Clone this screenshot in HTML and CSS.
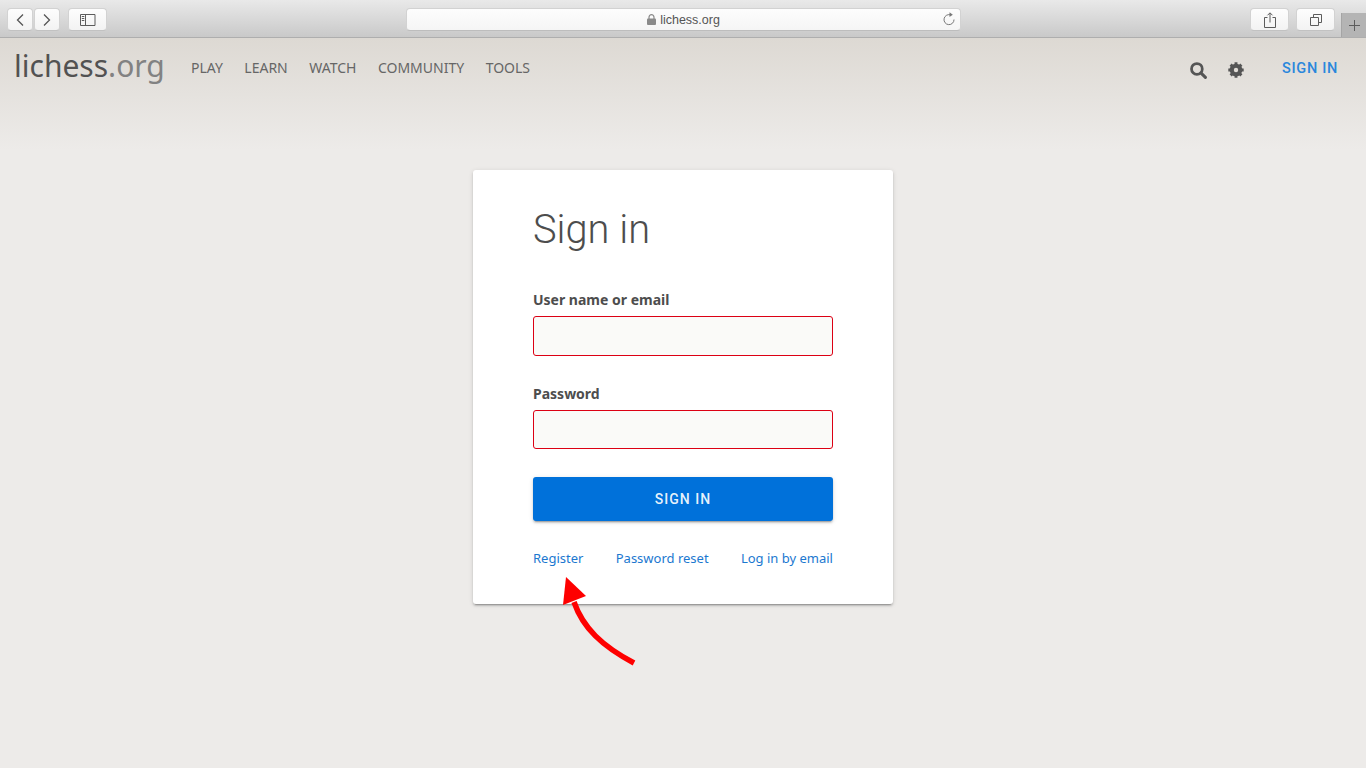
FILE: index.html
```html
<!DOCTYPE html>
<html lang="en">
<head>
<meta charset="utf-8">
<title>lichess.org</title>
<link rel="stylesheet" href="styles.css">
</head>
<body>
<div class="toolbar">
  <div class="nav-pair">
    <button class="tb-btn tb-nav"><svg width="10" height="14" viewBox="0 0 10 14"><path d="M8 1.500 2.500 7 8 12.500" class="ico"/></svg></button>
    <button class="tb-btn tb-nav"><svg width="10" height="14" viewBox="0 0 10 14"><path d="M2 1.500 7.500 7 2 12.500" class="ico"/></svg></button>
  </div>
  <button class="tb-btn tb-side"><svg width="16" height="12" viewBox="0 0 16 12"><path d="M.5.500h14.500v11H.5zM5.500.5v11" class="ico-thin"/><path d="M1.800 2.500h2.500M1.800 4.500h2.500M1.800 6.500h2.500" class="ico-thin"/></svg></button>
  <div class="address">
    <span class="address-text"><svg class="lock" width="9" height="11" viewBox="0 0 9 11"><path d="M2 5V3.200a2.500 2.500 0 0 1 5 0V5" fill="none" stroke="#8a8a8a" stroke-width="1.200"/><rect y="4.500" width="9" height="6.500" rx="1" fill="#8a8a8a"/></svg>lichess.org</span>
    <svg class="reload" width="12" height="14" viewBox="0 0 12 14"><path d="M7.300 2.800A5 5 0 1 0 11 7.500" fill="none" stroke="#777" stroke-width="1"/><path d="M6.500 0.300 9.800 2.800 6.500 5z" fill="#777"/></svg>
  </div>
  <div class="tb-right">
    <button class="tb-btn tb-act"><svg width="12" height="16" viewBox="0 0 12 16"><path d="M3.500 5.500H.5v10h11v-10h-3M6 10.500V1M3.500 3.300 6 .8l2.500 2.500" class="ico-thin"/></svg></button>
    <button class="tb-btn tb-act"><svg width="12" height="12" viewBox="0 0 12 12"><path d="M.5 3.500h8v8h-8zM3.500 3.500v-3h8v8h-3" class="ico-thin"/></svg></button>
  </div>
  <div class="new-tab"><svg width="11" height="11" viewBox="0 0 11 11"><path d="M5.500 0v11M0 5.500h11" class="ico-thin"/></svg></div>
</div>

<header class="site-header">
  <a class="logo">lichess<span class="logo-tld">.org</span></a>
  <nav class="site-nav">
    <a>PLAY</a>
    <a>LEARN</a>
    <a>WATCH</a>
    <a>COMMUNITY</a>
    <a>TOOLS</a>
  </nav>
  <div class="header-right">
    <svg class="h-icon" width="17" height="17" viewBox="0 0 18 18"><circle cx="7.300" cy="7.300" r="5.700" fill="none" stroke="#555" stroke-width="2.900"/><path d="M11.500 11.500 16.300 16.300" stroke="#555" stroke-width="3.200" stroke-linecap="round"/></svg>
    <svg class="h-icon gear" width="16" height="16" viewBox="0 0 16 16"><circle cx="8" cy="8" r="4.600" fill="none" stroke="#555" stroke-width="3.400"/><path d="M8 .3v15.400M.3 8h15.400M2.600 2.600l10.800 10.800M13.400 2.600 2.600 13.400" stroke="#555" stroke-width="2.900"/><circle cx="8" cy="8" r="2.200" fill="#e0dcd6"/></svg>
    <a class="signin-link">SIGN IN</a>
  </div>
</header>

<main class="page">
  <section class="card">
    <h1 class="title">Sign in</h1>
    <form class="form">
      <div class="field field-user">
        <label class="label">User name or email</label>
        <div class="input"></div>
      </div>
      <div class="field field-pass">
        <label class="label">Password</label>
        <div class="input"></div>
      </div>
      <div class="submit">SIGN IN</div>
    </form>
    <div class="links">
      <a>Register</a>
      <a>Password reset</a>
      <a>Log in by email</a>
    </div>
  </section>
</main>

<svg class="arrow" width="90" height="100" viewBox="0 0 90 100"><path d="M12 25C21 51 40 69 72 86" fill="none" stroke="#fe0000" stroke-width="5.500"/><path d="M4 0 24 19 1 28z" fill="#fe0000"/></svg>
</body>
</html>
```
FILE: styles.css
```css
* { box-sizing: border-box; }
html, body { margin: 0; height: 100%; }
body {
  width: 1366px;
  height: 768px;
  overflow: hidden;
  position: relative;
  background: #edebe9;
  font-family: "Noto Sans", sans-serif;
  color: #4d4d4d;
}
a { text-decoration: none; }

.toolbar {
  height: 38px;
  display: flex;
  align-items: flex-start;
  padding: 8px 0 0 7px;
  background: linear-gradient(#e9e9e9, #c9c9c9);
  border-bottom: 1px solid #aeaeae;
  position: relative;
}
.nav-pair { display: flex; gap: 1px; }
.tb-btn {
  height: 23px;
  padding: 0;
  border: 1px solid #d2d2d2;
  border-bottom-color: #c2c2c2;
  border-radius: 4px;
  background: linear-gradient(#fdfdfd, #f3f3f3);
  display: flex;
  align-items: center;
  justify-content: center;
}
.tb-nav { width: 26px; }
.tb-side { width: 39px; margin-left: 8px; }
.ico { fill: none; stroke: #555; stroke-width: 1.300; }
.ico-thin { fill: none; stroke: #5c5c5c; stroke-width: 1; }
.address {
  position: absolute;
  left: 406px;
  top: 8px;
  width: 555px;
  height: 23px;
  background: linear-gradient(#fdfdfd, #f5f5f5);
  border: 1px solid #d2d2d2;
  border-bottom-color: #bdbdbd;
  border-radius: 4px;
  display: flex;
  align-items: center;
  justify-content: center;
}
.address-text {
  font-family: "Liberation Sans", sans-serif;
  font-size: 12.500px;
  color: #555;
  display: flex;
  align-items: center;
  gap: 4px;
}
.reload { position: absolute; right: 5px; top: 3px; }
.tb-right { margin-left: auto; display: flex; gap: 7px; margin-right: 31px; }
.tb-act { width: 39px; }
.new-tab {
  position: absolute;
  right: 0;
  top: 13px;
  width: 25px;
  height: 24px;
  background: #b4b4b4;
  border-left: 1px solid #a5a5a5;
  display: flex;
  align-items: center;
  justify-content: center;
}

.site-header {
  height: 112px;
  background: linear-gradient(#ddd9d3, #edebe9);
  display: flex;
  align-items: flex-start;
  padding-left: 14px;
  position: relative;
}
.logo {
  font-size: 30px;
  line-height: 40px;
  margin-top: 8px;
  color: #525252;
  width: 177px;
  flex: none;
}
.logo-tld { color: #828282; }
.site-nav {
  display: flex;
  gap: 21.500px;
  font-family: "Noto Sans", sans-serif;
  font-size: 14px;
  line-height: 20px;
  margin-top: 20px;
  color: #666;
}
.header-right {
  margin-left: auto;
  display: flex;
  align-items: flex-start;
  padding-right: 28px;
  margin-top: 24px;
}
.h-icon { flex: none; }
.gear { margin-left: 21px; }
.signin-link {
  margin-left: 38px;
  margin-top: -2px;
  font-family: "Roboto", sans-serif;
  font-weight: 500;
  font-size: 14.500px;
  letter-spacing: .7px;
  color: #2a87dc;
}

.page {
  display: flex;
  justify-content: center;
  padding-top: 20px;
}
.card {
  width: 420px;
  height: 434px;
  background: #fff;
  border-radius: 3px;
  padding: 0 60px;
  box-shadow: 0 2px 2px 0 rgba(0,0,0,.14), 0 3px 1px -2px rgba(0,0,0,.2), 0 1px 5px 0 rgba(0,0,0,.12);
}
.title {
  margin: 0;
  padding-top: 36px;
  font-family: "Roboto", sans-serif;
  font-weight: 300;
  font-size: 39.800px;
  line-height: 48px;
  color: #4d4d4d;
}
.form { display: flex; flex-direction: column; }
.field { display: flex; flex-direction: column; }
.field-user { margin-top: 36px; }
.field-pass { margin-top: 28px; }
.label {
  font-weight: 700;
  font-size: 14px;
  line-height: 20px;
  margin-bottom: 6px;
}
.input {
  height: 40px;
  background: #fafaf8;
  border: 1px solid #dc0014;
  border-radius: 3px;
}
.field-pass .input { height: 39px; }
.submit {
  margin-top: 28px;
  height: 44px;
  background: #0071da;
  border-radius: 3px;
  color: rgba(255,255,255,.92);
  font-family: "Roboto", sans-serif;
  font-weight: 500;
  font-size: 14px;
  letter-spacing: 1px;
  display: flex;
  align-items: center;
  justify-content: center;
  box-shadow: 0 2px 2px 0 rgba(0,0,0,.14), 0 3px 1px -2px rgba(0,0,0,.2), 0 1px 5px 0 rgba(0,0,0,.12);
}
.links {
  margin-top: 27px;
  display: flex;
  justify-content: space-between;
  font-size: 13px;
  line-height: 20px;
  color: #1b78d0;
}

.arrow {
  position: absolute;
  left: 562px;
  top: 577px;
}
```
